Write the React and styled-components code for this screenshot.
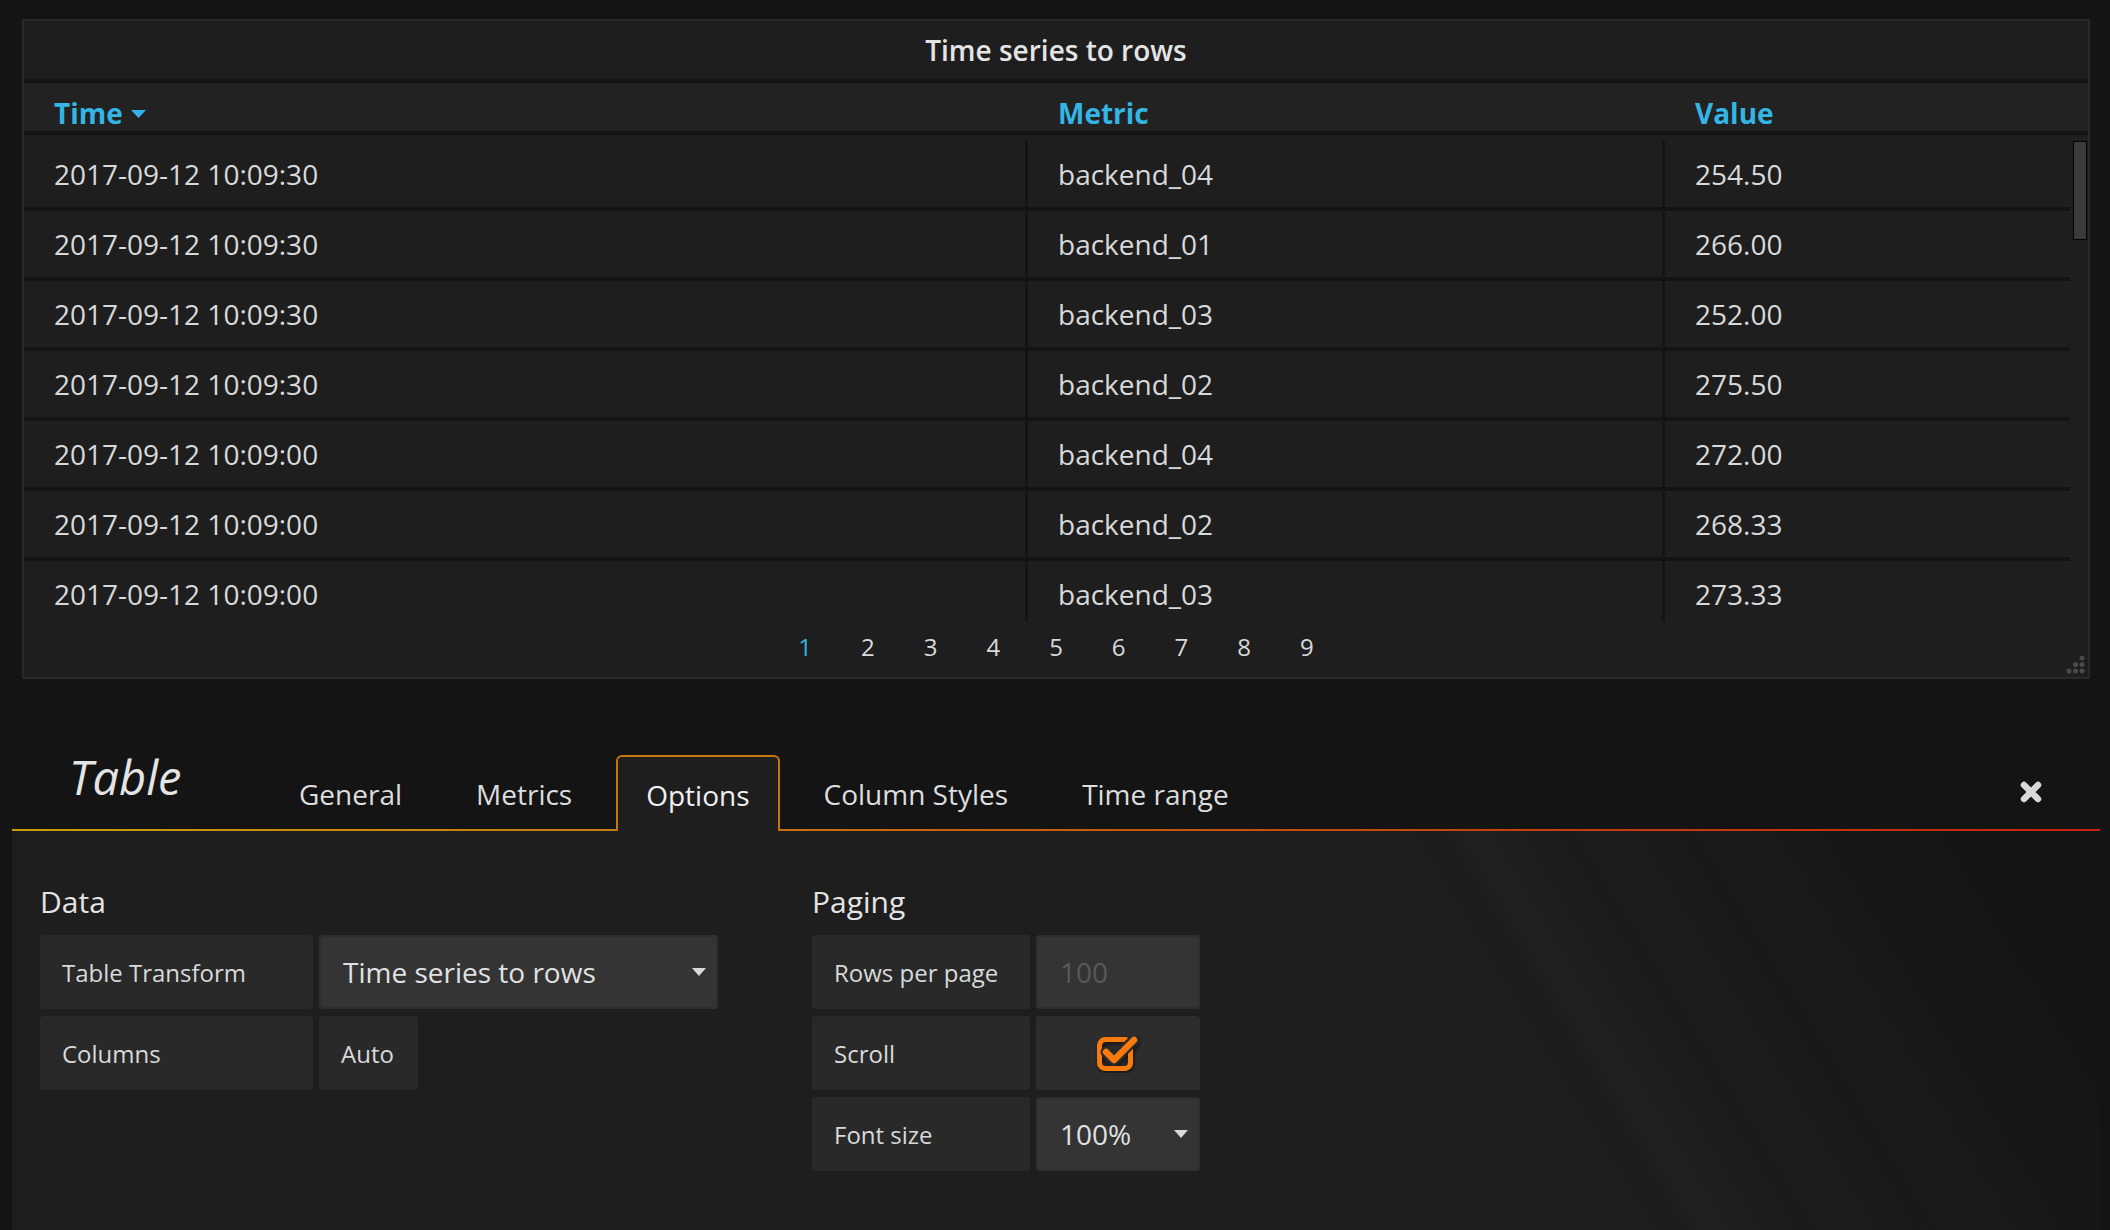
import React from "react";
import styled, { createGlobalStyle } from "styled-components";

const GlobalStyle = createGlobalStyle`
  html, body {
    margin: 0;
    padding: 0;
    background: #141414;
  }
  body {
    font-family: "Open Sans", "Noto Sans", "Liberation Sans", sans-serif;
    color: #d8d9da;
  }
`;

const Page = styled.div`
  width: 2110px;
  min-height: 1230px;
  box-sizing: border-box;
  padding-top: 19px;
  display: flex;
  flex-direction: column;
`;

const Panel = styled.div`
  position: relative;
  margin: 0 20px 0 22px;
  border: 2px solid #292929;
  background: #1f1e1f;
`;

const PanelTitle = styled.div`
  height: 58px;
  display: flex;
  align-items: center;
  justify-content: center;
  font-size: 28px;
  font-weight: 600;
  color: #e4e4e4;
  border-bottom: 4px solid #141414;
`;

const HeadRow = styled.div`
  display: grid;
  grid-template-columns: 1001px 637px 1fr;
  height: 48px;
  background: #232223;
  border-bottom: 4px solid #141414;
`;

const HeadCell = styled.div`
  padding: 13px 0 0 30px;
  border-left: ${(p) => (p.$sep ? "3px solid transparent" : "0")};
  font-size: 28px;
  line-height: 34px;
  font-weight: 700;
  color: #33b5e5;
  display: flex;
  align-items: flex-start;
  gap: 8px;
`;

const SortCaret = styled.svg`
  margin-top: 14px;
`;

const Body = styled.div`
  height: 487px;
  box-sizing: border-box;
  padding-top: 6px;
  display: flex;
  overflow: hidden;
`;

const Rows = styled.div`
  flex: 1;
`;

const Row = styled.div`
  display: grid;
  grid-template-columns: 1001px 637px 1fr;
  border-bottom: 4px solid #141414;

  &:last-child {
    border-bottom: 0;
  }
`;

const Cell = styled.div`
  height: 66px;
  display: flex;
  align-items: center;
  padding-left: 30px;
  border-left: ${(p) => (p.$sep ? "3px solid #141414" : "0")};
  font-size: 28px;
  line-height: 34px;
  color: #d8d9da;
`;

const ScrollTrack = styled.div`
  width: 18px;
  box-sizing: border-box;
  padding: 0 1px 0 3px;
`;

const ScrollThumb = styled.div`
  height: 99px;
  background: #3a3a3a;
  border: 1px solid #000;
  box-sizing: border-box;
`;

const Pager = styled.div`
  height: 55px;
  box-sizing: border-box;
  padding-bottom: 5px;
  display: flex;
  align-items: center;
  justify-content: center;
`;

const PageLink = styled.span`
  font-size: 24px;
  line-height: 30px;
  padding: 0 24.5px;
  color: ${(p) => (p.$active ? "#33b5e5" : "#d8d9da")};
`;

const ResizeHandle = styled.svg`
  position: absolute;
  right: 2px;
  bottom: 2px;
`;

const EditHeader = styled.div`
  margin: 76px 10px 0 12px;
  height: 74px;
  display: flex;
  align-items: flex-end;
  border-bottom: 2px solid transparent;
  border-image: linear-gradient(to right, #c99c07 0%, #c8790f 30%, #c6480e 65%, #c4240f 100%) 1;
`;

const EditTitle = styled.div`
  align-self: flex-start;
  box-sizing: border-box;
  width: 257px;
  padding-left: 57px;
  margin-top: -3px;
  font-size: 47px;
  line-height: 50px;
  font-style: italic;
  font-weight: 400;
  color: #e4e4e4;
`;

const Tabs = styled.div`
  display: flex;
  align-items: flex-end;
`;

const Tab = styled.div`
  height: 76px;
  box-sizing: border-box;
  margin: 0 14px -2px 0;
  padding: ${(p) => (p.$active ? "2px" : "0")} 28px 0;
  border: 2px solid ${(p) => (p.$active ? "#c8740f" : "transparent")};
  border-bottom: none;
  border-radius: 6px 6px 0 0;
  background: ${(p) => (p.$active ? "#1f1e1f" : "transparent")};
  display: flex;
  align-items: center;
  font-size: 28px;
  color: ${(p) => (p.$active ? "#eef0f2" : "#dcdddf")};
`;

const CloseButton = styled.svg`
  margin-left: auto;
  margin-right: 57px;
  align-self: center;
`;

const EditBody = styled.div`
  flex: 1;
  margin: 0 10px 0 12px;
  padding: 53px 28px;
  display: flex;
  background-color: #1f1e1f;
  background-image: linear-gradient(
    59deg,
    transparent 0%,
    transparent 70%,
    rgba(0, 0, 0, 0.07) 71.5%,
    rgba(255, 255, 255, 0.012) 73%,
    transparent 74.5%,
    rgba(0, 0, 0, 0.1) 77%,
    rgba(0, 0, 0, 0.05) 79%,
    rgba(0, 0, 0, 0.16) 82%,
    rgba(0, 0, 0, 0.12) 85%,
    rgba(0, 0, 0, 0.26) 89%,
    rgba(0, 0, 0, 0.34) 100%
  );
`;

const Section = styled.div`
  width: ${(p) => p.$w}px;
`;

const SectionTitle = styled.div`
  font-size: 30px;
  line-height: 36px;
  margin-bottom: 15px;
  color: #e4e4e4;
`;

const FormRow = styled.div`
  display: flex;
  gap: 6px;
  margin-bottom: 7px;
`;

const Label = styled.div`
  width: ${(p) => p.$w}px;
  height: 74px;
  box-sizing: border-box;
  padding-left: ${(p) => (p.$center ? "0" : "22px")};
  display: flex;
  align-items: center;
  justify-content: ${(p) => (p.$center ? "center" : "flex-start")};
  background: ${(p) => p.$bg || "#292929"};
  border-radius: 3px;
  font-size: 24px;
  color: #d8d9da;
`;

const Select = styled.div`
  width: ${(p) => p.$w}px;
  height: 74px;
  box-sizing: border-box;
  padding: 0 10px 0 22px;
  display: flex;
  align-items: center;
  justify-content: space-between;
  background: #343434;
  border: 2px solid #2e2e2e;
  border-radius: 3px;
  font-size: 28px;
  color: ${(p) => (p.$placeholder ? "#585858" : "#e0e1e2")};
`;

const Caret = () => (
  <svg width="14" height="8" viewBox="0 0 14 8">
    <path d="M0 0H14L7 8Z" fill="#d8d9da" />
  </svg>
);

const CheckIcon = () => (
  <svg width="46" height="40" viewBox="0 0 46 40">
    <defs>
      <filter id="sh" x="-30%" y="-30%" width="160%" height="160%">
        <feDropShadow dx="1" dy="2" stdDeviation="2" floodColor="#000" floodOpacity="0.6" />
      </filter>
    </defs>
    <g filter="url(#sh)">
      <rect x="4.5" y="6.5" width="31" height="29" rx="6" fill="none" stroke="#f97a0c" strokeWidth="5" />
      <path d="M11 19 L19 27 L39 7" fill="none" stroke="#2b2b2b" strokeWidth="11" strokeLinecap="round" strokeLinejoin="round" />
      <path d="M11 19 L19 27 L39 7" fill="none" stroke="#f97a0c" strokeWidth="6.5" strokeLinecap="round" strokeLinejoin="round" />
    </g>
  </svg>
);

const rows = [
  ["2017-09-12 10:09:30", "backend_04", "254.50"],
  ["2017-09-12 10:09:30", "backend_01", "266.00"],
  ["2017-09-12 10:09:30", "backend_03", "252.00"],
  ["2017-09-12 10:09:30", "backend_02", "275.50"],
  ["2017-09-12 10:09:00", "backend_04", "272.00"],
  ["2017-09-12 10:09:00", "backend_02", "268.33"],
  ["2017-09-12 10:09:00", "backend_03", "273.33"],
];

const tabs = ["General", "Metrics", "Options", "Column Styles", "Time range"];

export default function App() {
  return (
    <>
      <GlobalStyle />
      <Page>
        <Panel>
          <PanelTitle>Time series to rows</PanelTitle>
          <HeadRow>
            <HeadCell>
              Time
              <SortCaret width="15" height="8" viewBox="0 0 15 8">
                <path d="M0 0H15L7.5 8Z" fill="#33b5e5" />
              </SortCaret>
            </HeadCell>
            <HeadCell $sep>Metric</HeadCell>
            <HeadCell $sep>Value</HeadCell>
          </HeadRow>
          <Body>
            <Rows>
              {rows.map((r, i) => (
                <Row key={i}>
                  <Cell>{r[0]}</Cell>
                  <Cell $sep>{r[1]}</Cell>
                  <Cell $sep>{r[2]}</Cell>
                </Row>
              ))}
            </Rows>
            <ScrollTrack>
              <ScrollThumb />
            </ScrollTrack>
          </Body>
          <Pager>
            {[1, 2, 3, 4, 5, 6, 7, 8, 9].map((n) => (
              <PageLink key={n} $active={n === 1}>
                {n}
              </PageLink>
            ))}
          </Pager>
          <ResizeHandle width="20" height="20" viewBox="0 0 20 20">
            <g fill="#4a4a4a">
              <circle cx="16" cy="3" r="2.5" />
              <circle cx="9.5" cy="9.5" r="2.5" />
              <circle cx="16" cy="9.5" r="2.5" />
              <circle cx="3" cy="16" r="2.5" />
              <circle cx="9.5" cy="16" r="2.5" />
              <circle cx="16" cy="16" r="2.5" />
            </g>
          </ResizeHandle>
        </Panel>

        <EditHeader>
          <EditTitle>Table</EditTitle>
          <Tabs>
            {tabs.map((t) => (
              <Tab key={t} $active={t === "Options"}>
                {t}
              </Tab>
            ))}
          </Tabs>
          <CloseButton width="24" height="24" viewBox="0 0 24 24">
            <path d="M5 5L19 19M19 5L5 19" stroke="#d8d9da" strokeWidth="6.5" strokeLinecap="round" />
          </CloseButton>
        </EditHeader>

        <EditBody>
          <Section $w={772}>
            <SectionTitle>Data</SectionTitle>
            <FormRow>
              <Label $w={273}>Table Transform</Label>
              <Select $w={399}>
                Time series to rows
                <Caret />
              </Select>
            </FormRow>
            <FormRow>
              <Label $w={273}>Columns</Label>
              <Label $w={99}>Auto</Label>
            </FormRow>
          </Section>
          <Section $w={400}>
            <SectionTitle>Paging</SectionTitle>
            <FormRow>
              <Label $w={218}>Rows per page</Label>
              <Select $w={164} $placeholder>
                100
              </Select>
            </FormRow>
            <FormRow>
              <Label $w={218}>Scroll</Label>
              <Label $w={164} $bg="#2d2d2d" $center>
                <CheckIcon />
              </Label>
            </FormRow>
            <FormRow>
              <Label $w={218}>Font size</Label>
              <Select $w={164}>
                100%
                <Caret />
              </Select>
            </FormRow>
          </Section>
        </EditBody>
      </Page>
    </>
  );
}
